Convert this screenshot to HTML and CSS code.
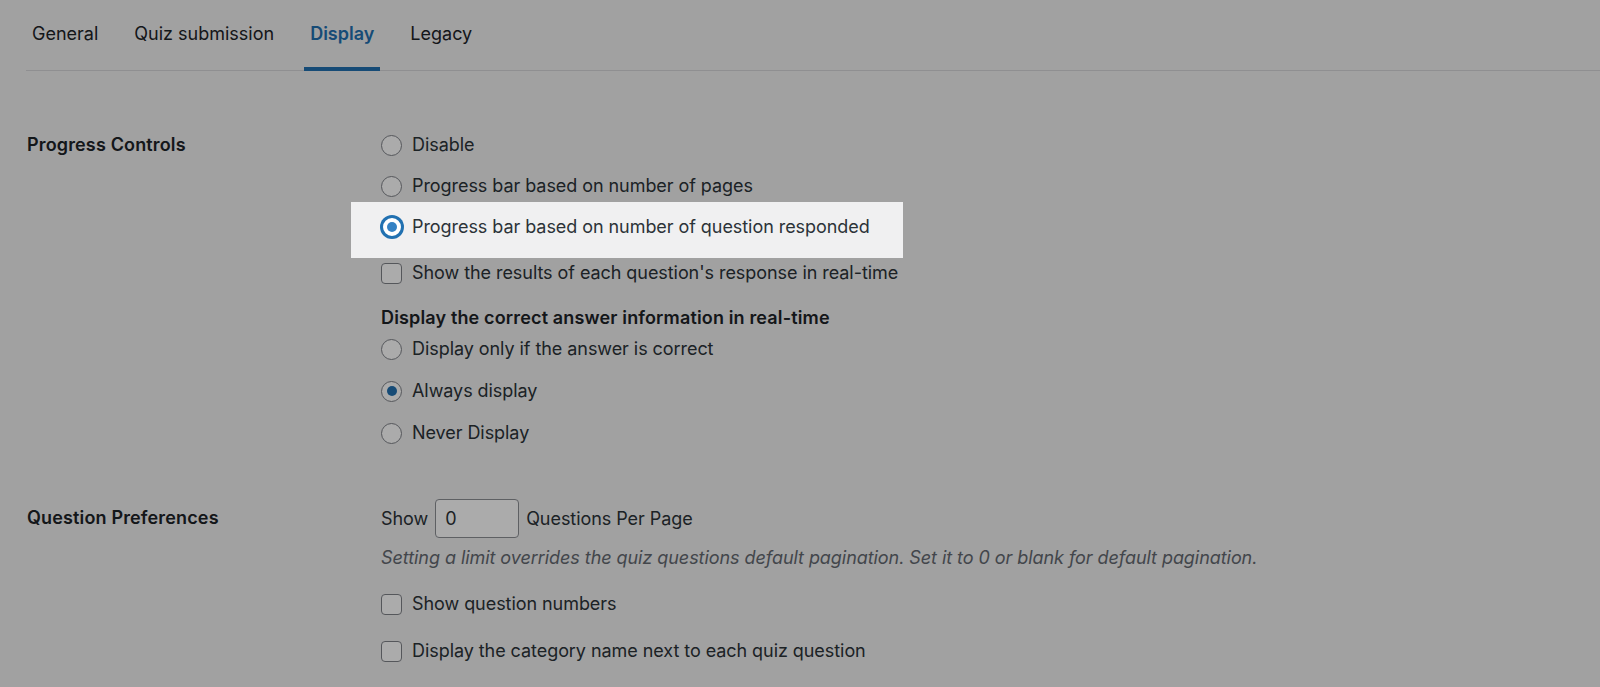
FILE: index.html
```html
<!DOCTYPE html>
<html lang="en">
<head>
<meta charset="utf-8">
<title>Quiz settings – Display</title>
<link rel="stylesheet" href="styles.css">
</head>
<body>
<div class="page">
  <nav class="tabs">
    <a class="tab">General</a>
    <a class="tab">Quiz submission</a>
    <a class="tab tab-active">Display</a>
    <a class="tab">Legacy</a>
  </nav>

  <div class="settings">
    <section class="row row-progress">
      <div class="row-label">Progress Controls</div>
      <div class="row-field">
        <ul class="options">
          <li class="opt"><span class="radio"></span>Disable</li>
          <li class="opt"><span class="radio"></span>Progress bar based on number of pages</li>
          <li class="opt opt-highlight"><span class="radio radio-focus"></span>Progress bar based on number of question responded</li>
        </ul>
        <div class="opt opt-check"><span class="checkbox"></span>Show the results of each question's response in real-time</div>
        <div class="field-heading">Display the correct answer information in real-time</div>
        <ul class="options options-tight">
          <li class="opt"><span class="radio"></span>Display only if the answer is correct</li>
          <li class="opt"><span class="radio radio-checked"></span>Always display</li>
          <li class="opt"><span class="radio"></span>Never Display</li>
        </ul>
      </div>
    </section>

    <section class="row row-questions">
      <div class="row-label row-label-input">Question Preferences</div>
      <div class="row-field">
        <div class="per-page">
          <span>Show</span>
          <span class="input">0</span>
          <span>Questions Per Page</span>
        </div>
        <p class="hint">Setting a limit overrides the quiz questions default pagination. Set it to 0 or blank for default pagination.</p>
        <div class="checks">
          <div class="opt"><span class="checkbox"></span>Show question numbers</div>
          <div class="opt"><span class="checkbox"></span>Display the category name next to each quiz question</div>
        </div>
      </div>
    </section>
  </div>
</div>
<div class="overlay"></div>
</body>
</html>
```

FILE: styles.css
```css
* {
  box-sizing: border-box;
}

html, body {
  margin: 0;
  padding: 0;
}

body {
  background: #f0f0f1;
  color: #1d2327;
  font-family: Inter, "Liberation Sans", Arial, sans-serif;
  font-size: 18px;
  line-height: 24px;
  letter-spacing: -0.06px;
  width: 1600px;
  height: 687px;
  overflow: hidden;
}

/* Tabs */
.tabs {
  display: flex;
  gap: 24px;
  margin-left: 26px;
  height: 71px;
  border-bottom: 1px solid #d6d6d8;
}

.tab {
  display: flex;
  align-items: center;
  height: 71px;
  padding: 0 6px;
  color: #1d2327;
  font-size: 18px;
  letter-spacing: 0;
  border-bottom: 4px solid transparent;
}

.tab-active {
  color: #2271b1;
  font-weight: 600;
  border-bottom-color: #2271b1;
}

/* Settings rows */
.settings {
  padding-left: 27px;
}

.row {
  display: grid;
  grid-template-columns: 354px 1fr;
}

.row-progress {
  padding-top: 62px;
}

.row-questions {
  padding-top: 54px;
}

.row-label {
  font-weight: 600;
  letter-spacing: 0.15px;
  color: #1d2327;
}

.row-label-input {
  padding-top: 7px;
}

.row-field {
  color: #2c3338;
}

.options {
  list-style: none;
  margin: 0;
  padding: 0;
  display: flex;
  flex-direction: column;
  gap: 17px;
}

.options-tight {
  margin-top: 7px;
}

.options-tight .opt + .opt {
  margin-top: 1px;
}

.opt {
  display: flex;
  align-items: center;
  gap: 10px;
  height: 24px;
  white-space: nowrap;
}

.opt-highlight {
  position: relative;
  z-index: 2;
}

.opt-highlight::before {
  content: "";
  position: absolute;
  left: -30px;
  width: 552px;
  top: -13px;
  bottom: -19px;
  background: #f0f0f1;
  z-index: -1;
}

.opt-check {
  margin-top: 22px;
}

.field-heading {
  margin-top: 21px;
  font-weight: 600;
  letter-spacing: 0.15px;
  color: #1d2327;
}

/* Controls */
.radio {
  flex: none;
  width: 21px;
  height: 21px;
  border: 1px solid #7f8288;
  border-radius: 50%;
  background: #fff;
  position: relative;
}

.radio-checked::after,
.radio-focus::after {
  content: "";
  position: absolute;
  width: 10px;
  height: 10px;
  border-radius: 50%;
  background: #3582c4;
  left: 50%;
  top: 50%;
  transform: translate(-50%, -50%);
}

.radio-checked::after {
  background: #2271b1;
}

.radio-focus {
  width: 22px;
  height: 22px;
  border: 2px solid #2271b1;
  box-shadow: 0 0 0 1px #2271b1;
  margin-right: -1px;
}

.checkbox {
  flex: none;
  width: 21px;
  height: 21px;
  border: 1px solid #7f8288;
  border-radius: 4px;
  background: #fff;
}

.per-page {
  display: flex;
  align-items: center;
  height: 39px;
  gap: 7px;
}

.input {
  display: flex;
  align-items: center;
  width: 84px;
  height: 39px;
  padding-left: 9px;
  border: 1px solid #8c8f94;
  border-radius: 4px;
  background: #fff;
  color: #2c3338;
}

.hint {
  margin: 8px 0 0;
  font-style: italic;
  color: #646970;
}

.checks {
  margin-top: 22px;
  display: flex;
  flex-direction: column;
  gap: 23px;
}

/* Dimming backdrop */
.overlay {
  position: fixed;
  inset: 0;
  background: rgba(0, 0, 0, 0.33);
  z-index: 1;
}
```
